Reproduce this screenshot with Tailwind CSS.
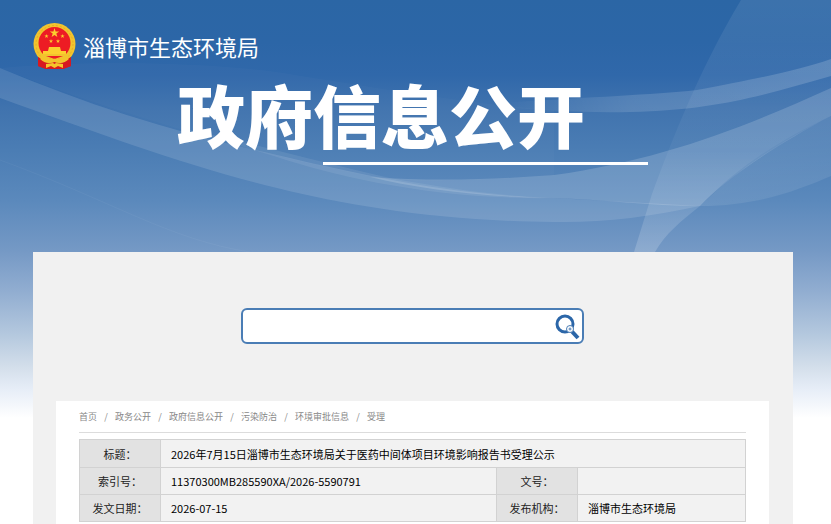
<!DOCTYPE html>
<html lang="zh-CN">
<head>
  <meta charset="UTF-8" />
  <meta name="viewport" content="width=device-width, initial-scale=1.0"/>
  <title>淄博市生态环境局 - 政府信息公开</title>
  <script src="https://cdn.jsdelivr.net/npm/@tailwindcss/browser@4"></script>
</head>
<body class="relative flex flex-col min-h-screen bg-white overflow-x-hidden font-['Noto_Sans_CJK_SC',sans-serif]">

  <!-- Background waves -->
  <svg class="absolute inset-x-0 top-0 -z-10 w-full h-[418px]" viewBox="0 0 831 418" preserveAspectRatio="none" aria-hidden="true">
    <defs>
      <linearGradient id="sky" x1="0" y1="0" x2="0" y2="1">
        <stop offset="0" stop-color="#2b66a5"/>
        <stop offset="0.1" stop-color="#2c66a7"/>
        <stop offset="0.18" stop-color="#3068aa"/>
        <stop offset="0.26" stop-color="#4073ae"/>
        <stop offset="0.36" stop-color="#4b7db4"/>
        <stop offset="0.48" stop-color="#5b89bc"/>
        <stop offset="0.6" stop-color="#7599c5"/>
        <stop offset="0.7" stop-color="#92aed1"/>
        <stop offset="0.8" stop-color="#b4c8de"/>
        <stop offset="0.88" stop-color="#d4dfeb"/>
        <stop offset="0.93" stop-color="#e6edf7"/>
        <stop offset="1" stop-color="#ffffff"/>
      </linearGradient>
      <linearGradient id="ribbon" x1="0" y1="0" x2="1" y2="0">
        <stop offset="0" stop-color="#fff" stop-opacity="0"/>
        <stop offset="0.4" stop-color="#fff" stop-opacity="0.13"/>
        <stop offset="1" stop-color="#fff" stop-opacity="0.17"/>
      </linearGradient>
      <linearGradient id="shade" x1="0" y1="0" x2="0.3" y2="1">
        <stop offset="0" stop-color="#fff" stop-opacity="0.13"/>
        <stop offset="1" stop-color="#fff" stop-opacity="0.08"/>
      </linearGradient>
      <linearGradient id="tail" x1="0" y1="0" x2="0" y2="1">
        <stop offset="0" stop-color="#fff" stop-opacity="0.08"/>
        <stop offset="0.6" stop-color="#fff" stop-opacity="0.04"/>
        <stop offset="1" stop-color="#fff" stop-opacity="0.18"/>
      </linearGradient>
    </defs>
    <rect width="831" height="418" fill="url(#sky)"/>
    <path d="M0 68C90 60 200 62 277 72C390 90 470 104 554 110L554 175C500 180 440 182 390 180C300 166 120 116 0 68Z" fill="#fff" fill-opacity="0.02"/>
    <path d="M0 68C90 106 180 134 277 155C350 172 450 196 554 198L700 206C650 217 600 223 554 222C440 221 350 206 277 188C190 167 100 134 0 98Z" fill="#fff" fill-opacity="0.12"/>
    <path d="M180 128C250 142 330 165 390 178C450 189 500 196 554 198C440 200 340 178 277 157Z" fill="#fff" fill-opacity="0.08"/>
    <path d="M370 177C440 182 500 179 554 175C660 160 740 129 831 88L831 116C770 148 725 180 700 206C650 206 600 199 554 198C480 197 420 189 370 177Z" fill="#fff" fill-opacity="0.16"/>
    <path d="M500 103C590 97 650 95 697 90C760 78 800 70 831 59L831 76C770 93 720 110 630 112C580 113 540 110 500 107Z" fill="url(#ribbon)"/>
    <path d="M741 0C700 68 672 140 652 194L634 252L655 252C666 233 680 222 700 206C740 165 780 140 831 116L831 0Z" fill="url(#tail)"/>
    <path d="M831 116C770 148 735 172 700 206C760 206 800 189 831 176Z" fill="url(#shade)"/>
    <path d="M0 160C110 200 170 240 250 252" fill="none" stroke="#fff" stroke-opacity="0.04"/>
  </svg>

  <!-- Site header -->
  <header class="h-[252px] pt-[22px] pl-[33px]">
    <a href="#" class="flex items-center gap-[7px] w-fit text-white text-[22px] leading-[48px]">
      <svg class="w-[43px] h-12" viewBox="0 0 43 48" aria-hidden="true">
        <path d="M6 33L5 44L13 47L30 47L38 44L37 33Z" fill="#d71920"/>
        <circle cx="21.500" cy="22" r="21" fill="#f2c42d"/>
        <circle cx="21.500" cy="22" r="18.500" fill="none" stroke="#e5ac26" stroke-width="1" stroke-dasharray="2 2"/>
        <circle cx="21.500" cy="21" r="16" fill="#ed1c24"/>
        <path d="M21.500 6L22.600 9.400H26.200L23.300 11.500L24.400 15L21.500 12.900L18.600 15L19.700 11.500L16.800 9.400H20.400Z" fill="#fccf2f"/>
        <path id="star" d="M13.500 12L14 13.500H15.600L14.300 14.500L14.800 16L13.500 15L12.200 16L12.700 14.500L11.400 13.500H13Z" fill="#fccf2f"/>
        <use href="#star" x="16"/>
        <use href="#star" x="4.500" y="5"/>
        <use href="#star" x="11.500" y="5"/>
        <path d="M16 25H27L28 29H33V32H10V29H15Z" fill="#fccf2f"/>
        <path d="M7 32H36L34 39C29 35 26 36 21.500 39C17 36 14 35 9 39Z" fill="#f2c42d"/>
        <path d="M13 34H30L21.500 37Z" fill="#ed1c24"/>
        <path d="M5 35L12 39C15 41 18 42 21.500 40C25 42 28 41 31 39L38 35L38 44L30 47H13L5 44Z" fill="#d71920"/>
        <path d="M8 36C12 40 16 41 21.500 38C27 41 31 40 35 36" fill="none" stroke="#f2c42d" stroke-width="2.500"/>
        <path d="M13 42L20 41L21.500 42L23 41L30 42L30 46L25 44L21.500 46L18 44L13 46Z" fill="#f6c52b"/>
      </svg>
      <span>淄博市生态环境局</span>
    </a>
    <div class="w-fit ml-36">
      <h1 class="pb-1 text-white text-[68px] leading-[88px] font-black">政府信息公开</h1>
      <div class="ml-[146px] w-[325px] h-[3px] bg-white"></div>
    </div>
  </header>

  <!-- Content -->
  <main class="flex flex-col grow ml-[33px] mr-[38px] pl-[23px] pr-6 bg-[#f1f1f1]">
    <form class="flex justify-center pt-14 pb-[57px]" onsubmit="return false">
      <div class="flex items-center w-[343px] h-9 mr-px bg-white border-2 border-[#4a7db5] rounded-md">
        <input type="text" aria-label="搜索" class="flex-1 min-w-0 h-full px-3 text-sm outline-none" />
        <button type="submit" aria-label="搜索" class="w-[30px] h-8">
          <svg class="w-8 h-8" viewBox="0 0 32 32" fill="none" aria-hidden="true">
            <circle cx="13" cy="14" r="8" stroke="#2b66a8" stroke-width="3"/>
            <path d="M19.500 21L26 28" stroke="#2b66a8" stroke-width="4"/>
            <circle cx="18" cy="19" r="3.500" fill="#fff" stroke="#4a7db5" stroke-width="1"/>
            <path d="M16.500 19H19.500M18 17.500V20.500" stroke="#4a7db5" stroke-width="1"/>
          </svg>
        </button>
      </div>
    </form>

    <section class="grow bg-white px-[23px]">
      <nav aria-label="面包屑" class="flex items-center gap-[7px] h-8 border-b border-[#dcdcdc] text-[9px] text-[#888]">
        <a href="#">首页</a><span class="w-1 text-center">/</span>
        <a href="#">政务公开</a><span class="w-1 text-center">/</span>
        <a href="#">政府信息公开</a><span class="w-1 text-center">/</span>
        <a href="#">污染防治</a><span class="w-1 text-center">/</span>
        <a href="#">环境审批信息</a><span class="w-1 text-center">/</span>
        <a href="#">受理</a>
      </nav>

      <table class="w-full mt-[6px] table-fixed border-collapse bg-[#f2f2f2] text-[11px] leading-4 text-black">
        <colgroup>
          <col class="w-[81px]" />
          <col />
          <col class="w-[81px]" />
          <col class="w-[168px]" />
        </colgroup>
        <tbody>
          <tr class="h-7">
            <th scope="row" class="border border-[#d2d2d2] bg-[#e2e2e2] font-normal text-[#222]">标题：</th>
            <td colspan="3" class="border border-[#d2d2d2] px-[10px]">2026年7月15日淄博市生态环境局关于医药中间体项目环境影响报告书受理公示</td>
          </tr>
          <tr class="h-[27px]">
            <th scope="row" class="border border-[#d2d2d2] bg-[#e2e2e2] font-normal text-[#222]">索引号：</th>
            <td class="border border-[#d2d2d2] px-[10px]">11370300MB285590XA/2026-5590791</td>
            <th scope="row" class="border border-[#d2d2d2] bg-[#e2e2e2] font-normal text-[#222]">文号：</th>
            <td class="border border-[#d2d2d2] px-[10px]"></td>
          </tr>
          <tr class="h-[27px]">
            <th scope="row" class="border border-[#d2d2d2] bg-[#e2e2e2] font-normal text-[#222]">发文日期：</th>
            <td class="border border-[#d2d2d2] px-[10px]">2026-07-15</td>
            <th scope="row" class="border border-[#d2d2d2] bg-[#e2e2e2] font-normal text-[#222]">发布机构：</th>
            <td class="border border-[#d2d2d2] px-[10px]">淄博市生态环境局</td>
          </tr>
        </tbody>
      </table>
    </section>
  </main>
</body>
</html>
